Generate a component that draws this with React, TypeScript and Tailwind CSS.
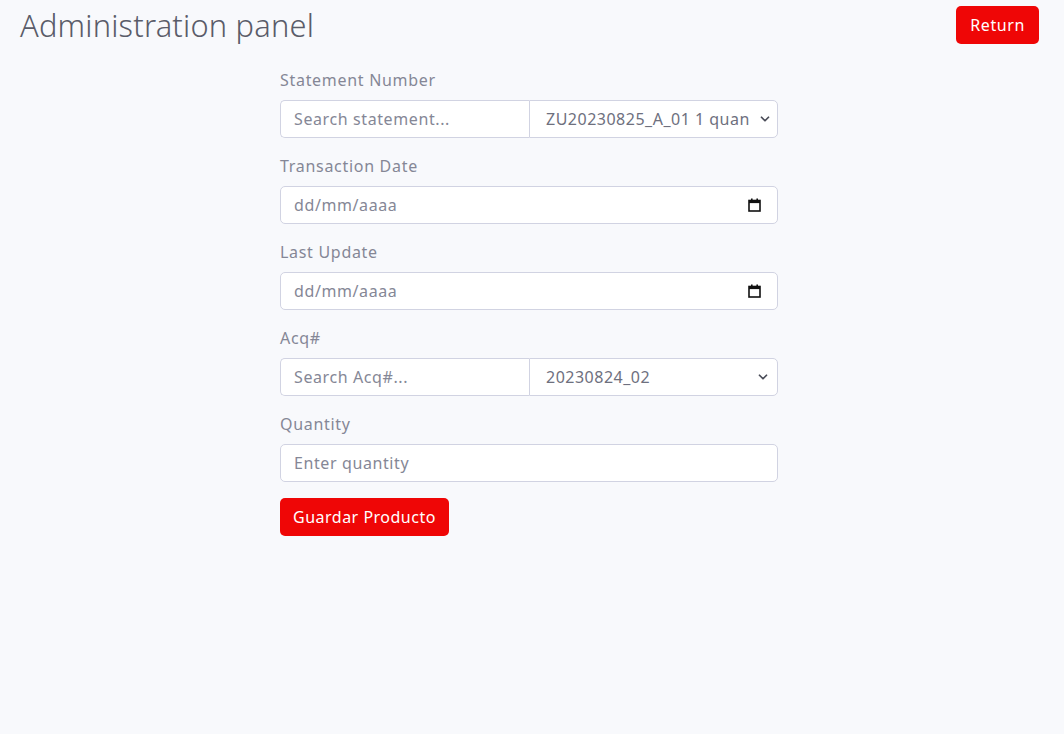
import { ChevronDown } from 'lucide-react';

const font = { fontFamily: '"Noto Sans", "Open Sans", sans-serif' };

function CalendarIcon() {
  return (
    <svg width="13" height="14" viewBox="0 0 13 14" className="shrink-0">
      <rect x="1" y="2.5" width="11" height="10.5" fill="none" stroke="#111" strokeWidth="1.6" />
      <rect x="1" y="2.5" width="11" height="2.6" fill="#111" />
      <rect x="3" y="0.5" width="1.6" height="3" fill="#111" />
      <rect x="8.4" y="0.5" width="1.6" height="3" fill="#111" />
    </svg>
  );
}

function Label({ children }: { children: React.ReactNode }) {
  return <label className="mb-2 block text-[16px] leading-6 tracking-[0.7px] text-[#858796]">{children}</label>;
}

function SelectBox({ value }: { value: string }) {
  return (
    <div className="flex h-[38px] flex-1 items-center overflow-hidden rounded-r-[5px] border border-[#d1d3e2] bg-white pl-4 pr-[7px]">
      <span className="flex-1 whitespace-nowrap text-[16px] tracking-[0.5px] text-[#6e707e]">{value}</span>
      <ChevronDown className="ml-2 h-[14px] w-[14px] shrink-0 text-[#4a4c58]" strokeWidth={3} />
    </div>
  );
}

function DateBox() {
  return (
    <div className="flex h-[38px] items-center justify-between rounded-[5px] border border-[#d1d3e2] bg-white pl-[13px] pr-4">
      <span className="text-[16px] tracking-[0.6px] text-[#858796]">dd/mm/aaaa</span>
      <CalendarIcon />
    </div>
  );
}

const inputCls =
  'h-[38px] border border-[#d1d3e2] bg-white px-[13px] text-[16px] tracking-[0.6px] outline-none placeholder:text-[#858796]';

export default function App() {
  return (
    <div className="min-h-[734px] bg-[#f8f9fc]" style={font}>
      {/* Header */}
      <div className="flex items-start justify-between pl-5 pr-[25px] pt-[6px]">
        <h1 className="mt-[-1px] text-[30.8px] font-light leading-[40px] tracking-[0.2px] text-[#5a5c69]">Administration panel</h1>
        <button className="h-[38px] rounded-[5px] bg-[#ef0606] px-[14px] text-[16px] tracking-[0.6px] text-white">Return</button>
      </div>

      {/* Form */}
      <div className="ml-[280px] mt-[23px] w-[498px]">
        <div className="mb-4">
          <Label>Statement Number</Label>
          <div className="flex">
            <input placeholder="Search statement..." className={`${inputCls} w-[249px] rounded-l-[5px] border-r-0`} />
            <SelectBox value="ZU20230825_A_01 1 quan" />
          </div>
        </div>

        <div className="mb-4">
          <Label>Transaction Date</Label>
          <DateBox />
        </div>

        <div className="mb-4">
          <Label>Last Update</Label>
          <DateBox />
        </div>

        <div className="mb-4">
          <Label>Acq#</Label>
          <div className="flex">
            <input placeholder="Search Acq#..." className={`${inputCls} w-[249px] rounded-l-[5px] border-r-0`} />
            <SelectBox value="20230824_02" />
          </div>
        </div>

        <div className="mb-4">
          <Label>Quantity</Label>
          <input placeholder="Enter quantity" className={`${inputCls} w-full rounded-[5px]`} />
        </div>

        <button className="h-[38px] rounded-[5px] bg-[#ef0606] px-[13px] text-[16px] tracking-[0.5px] text-white">
          Guardar Producto
        </button>
      </div>
    </div>
  );
}
